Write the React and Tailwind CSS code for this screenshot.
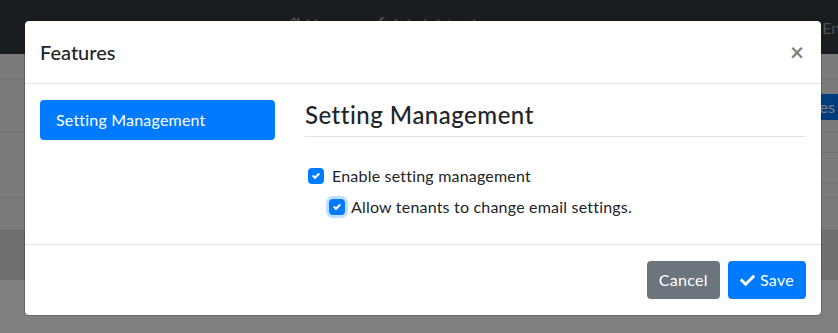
import React from 'react';
import { FaCheck, FaHome, FaWrench } from 'react-icons/fa';

const font = { fontFamily: 'Lato, "Noto Sans", sans-serif' };

function CheckBox({ focused }) {
  return (
    <span
      className={`flex h-4 w-4 shrink-0 items-center justify-center rounded-[4px] bg-[#007bff] ${
        focused ? 'ring-[3px] ring-[#007bff]/25' : ''
      }`}
    >
      <svg viewBox="0 0 8 8" className="h-2 w-2" fill="#fff">
        <path d="M6.564.75l-3.59 3.612-1.538-1.55L0 4.26 2.974 7.25 8 2.193z" />
      </svg>
    </span>
  );
}

function BackgroundPage() {
  return (
    <div className="flex h-full flex-col bg-white">
      {/* Navbar */}
      <div className="flex h-[54px] shrink-0 items-start bg-[#343a40] text-[16px] text-white/50">
        <div className="ml-[286px] mt-[12px] flex items-center gap-6">
          <span className="flex items-center gap-1">
            <FaHome className="h-4 w-4" /> Home
          </span>
          <span className="flex items-center gap-1">
            <FaWrench className="h-3.5 w-3.5" /> Administration
          </span>
        </div>
        <span className="ml-auto mt-[16px] mr-[-34px]">English</span>
      </div>
      {/* Content */}
      <div className="flex flex-1 flex-col">
        <div className="h-[25px] border-b border-[#dee2e6] bg-[#f4f4f4]" />
        <div className="flex h-[53px] items-start justify-end border-b border-[#dee2e6] bg-[#f4f4f4]">
          <span className="mt-[15px] mr-[-9px] rounded-[4px] bg-[#007bff] px-3 leading-[26px] text-white">
            Features
          </span>
        </div>
        <div className="flex h-[21px] justify-end bg-[#f4f4f4]">
          <div className="w-[60px] border-b border-[#dee2e6]" />
        </div>
        <div className="flex h-[30px] justify-end bg-[#f4f4f4]">
          <div className="w-[60px] border-b border-[#dee2e6]" />
        </div>
        <div className="h-[15px] border-b border-[#dee2e6] bg-[#f4f4f4]" />
        <div className="h-[32px] bg-[#f4f4f4]" />
        <div className="h-[50px] bg-[#dfdfdf]" />
      </div>
    </div>
  );
}

export default function App() {
  return (
    <div className="relative h-[333px] w-[838px] overflow-hidden" style={font}>
      <BackgroundPage />
      <div className="absolute inset-0 bg-black/50" />

      {/* Modal */}
      <div className="absolute left-[24px] top-[20px] w-[798px] rounded-[5px] border border-black/20 bg-white bg-clip-padding text-[#212529]">
        <div className="flex items-start justify-between border-b border-[#dee2e6] px-[15px] py-4">
          <h5 className="text-[20px] font-medium leading-[30px]">Features</h5>
          <button className="mr-[2px] text-[24px] font-bold leading-[30px] text-black opacity-50">
            ×
          </button>
        </div>

        <div className="flex gap-[30px] px-[15px] py-4">
          <div className="w-[235px] shrink-0">
            <div className="rounded-[4px] bg-[#007bff] px-4 py-2 text-[16px] leading-6 tracking-[0.2px] text-white">
              Setting Management
            </div>
          </div>
          <div className="flex-1 pr-[1px]">
            <h4 className="border-b border-[#dee2e6] pb-[7px] text-[24px] font-medium leading-[29px] tracking-[0.5px]">
              Setting Management
            </h4>
            <div className="mt-[27px] flex items-center gap-2 pl-[3px] text-[16px] leading-6 tracking-[0.2px]">
              <CheckBox />
              <span>Enable setting management</span>
            </div>
            <div className="mt-[7px] flex items-center gap-[6px] pl-[24px] text-[16px] leading-6 tracking-[0.2px]">
              <CheckBox focused />
              <span>Allow tenants to change email settings.</span>
            </div>
            <div className="h-[9px]" />
          </div>
        </div>

        <div className="flex justify-end gap-2 border-t border-[#dee2e6] px-[15px] py-4">
          <button className="h-[38px] rounded-[4px] bg-[#6c757d] px-3 text-[16px] tracking-[0.3px] text-white">
            Cancel
          </button>
          <button className="flex h-[38px] items-center gap-[5px] rounded-[4px] bg-[#007bff] px-3 text-[16px] tracking-[0.3px] text-white">
            <FaCheck className="h-[15px] w-[15px]" />
            Save
          </button>
        </div>
      </div>
    </div>
  );
}
